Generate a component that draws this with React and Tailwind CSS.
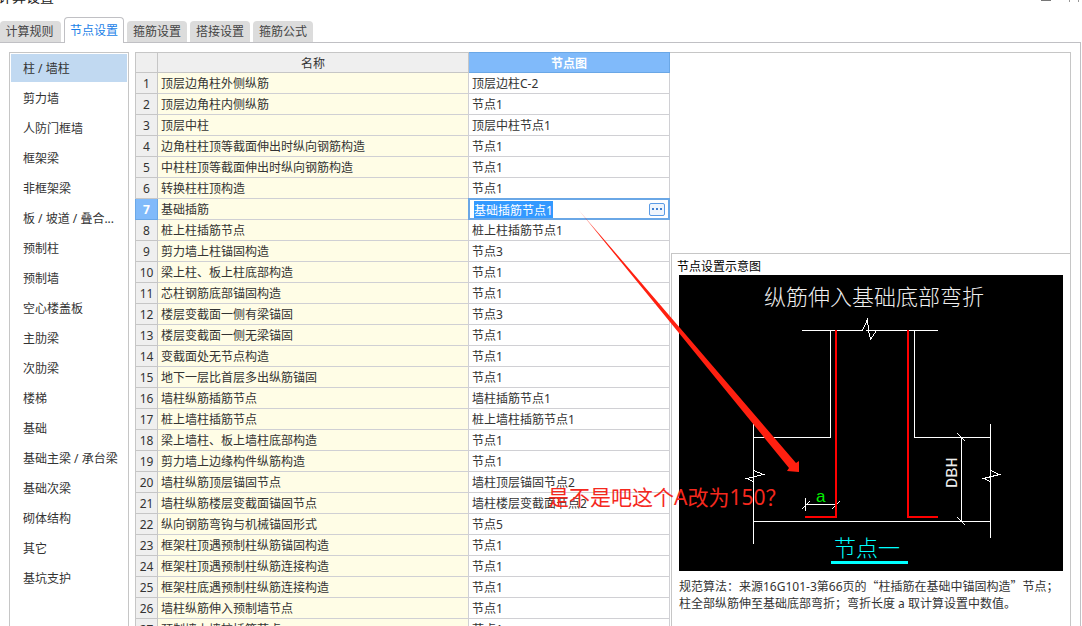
const sans = "font-['Noto_Sans','Noto_Sans_CJK_SC',sans-serif]";
const cjk = "font-['Noto_Sans_CJK_SC',sans-serif]";

const tabs = ['计算规则', '节点设置', '箍筋设置', '搭接设置', '箍筋公式'];

const categories = [
  '柱 / 墙柱', '剪力墙', '人防门框墙', '框架梁', '非框架梁', '板 / 坡道 / 叠合...', '预制柱', '预制墙',
  '空心楼盖板', '主肋梁', '次肋梁', '楼梯', '基础', '基础主梁 / 承台梁', '基础次梁', '砌体结构', '其它', '基坑支护',
];

const rows = [
  ['顶层边角柱外侧纵筋', '顶层边柱C-2'],
  ['顶层边角柱内侧纵筋', '节点1'],
  ['顶层中柱', '顶层中柱节点1'],
  ['边角柱柱顶等截面伸出时纵向钢筋构造', '节点1'],
  ['中柱柱顶等截面伸出时纵向钢筋构造', '节点1'],
  ['转换柱柱顶构造', '节点1'],
  ['基础插筋', '基础插筋节点1'],
  ['桩上柱插筋节点', '桩上柱插筋节点1'],
  ['剪力墙上柱锚固构造', '节点3'],
  ['梁上柱、板上柱底部构造', '节点1'],
  ['芯柱钢筋底部锚固构造', '节点1'],
  ['楼层变截面一侧有梁锚固', '节点3'],
  ['楼层变截面一侧无梁锚固', '节点1'],
  ['变截面处无节点构造', '节点1'],
  ['地下一层比首层多出纵筋锚固', '节点1'],
  ['墙柱纵筋插筋节点', '墙柱插筋节点1'],
  ['桩上墙柱插筋节点', '桩上墙柱插筋节点1'],
  ['梁上墙柱、板上墙柱底部构造', '节点1'],
  ['剪力墙上边缘构件纵筋构造', '节点1'],
  ['墙柱纵筋顶层锚固节点', '墙柱顶层锚固节点2'],
  ['墙柱纵筋楼层变截面锚固节点', '墙柱楼层变截面节点2'],
  ['纵向钢筋弯钩与机械锚固形式', '节点5'],
  ['框架柱顶遇预制柱纵筋锚固构造', '节点1'],
  ['框架柱顶遇预制柱纵筋连接构造', '节点1'],
  ['框架柱底遇预制柱纵筋连接构造', '节点1'],
  ['墙柱纵筋伸入预制墙节点', '节点1'],
  ['预制墙上墙柱插筋节点', '节点1'],
];

function TitleBar() {
  return (
    <header className="flex h-[9px] shrink-0 items-end justify-between overflow-hidden">
      <h1 className="-ml-0.5 pb-0.5 text-sm leading-5 text-[#222]">计算设置</h1>
      <div className="flex h-full gap-[18px] pr-[3px]">
        <button aria-label="最小化" className="h-px w-[10px] bg-[#777]" />
        <button aria-label="最大化" className="h-0.5 w-[10px] border-x border-[#999]" />
      </div>
    </header>
  );
}

function Tabs() {
  return (
    <nav role="tablist" className="flex h-[34px] shrink-0 items-end gap-[3px]">
      {tabs.map((label, i) =>
        i === 1 ? (
          <button key={label} role="tab" aria-selected="true" className="relative z-10 h-[26px] w-[60px] rounded-t border border-b-0 border-[#c0c0c4] bg-white text-xs text-[#1b7fe8]">
            {label}
          </button>
        ) : (
          <button key={label} role="tab" aria-selected="false" className={`mb-px h-[21px] rounded-t bg-[#dcdcdc] text-xs text-[#444] ${i === 0 ? 'w-[61px] pr-0.5' : 'w-[60px]'}`}>
            {label}
          </button>
        ),
      )}
    </nav>
  );
}

function Categories() {
  return (
    <ul className="w-[120px] shrink-0 border border-b-0 border-[#c6c6c6] p-px">
      {categories.map((label, i) => (
        <li key={label}>
          <button className={`block w-full truncate pl-3 text-left text-xs ${i === 0 ? 'mb-0.5 h-[28px] bg-[#c1d9f1] pt-px' : 'h-[30px]'}`}>
            {label}
          </button>
        </li>
      ))}
    </ul>
  );
}

function NodeCell({ value }) {
  return (
    <div className="flex h-5 items-center justify-between pl-[5px] pr-1 outline-2 -outline-offset-1 outline-[#6aa7e6]">
      <input
        aria-label="节点图"
        defaultValue={value}
        className="h-[17px] w-[79px] bg-[#3399ff] pt-px text-xs text-white outline-none"
      />
      <button aria-label="更多" className="flex h-[13px] w-4 items-center justify-center gap-0.5 rounded-xs border border-[#5a9be6] bg-[#eef5fd]">
        <span className="size-0.5 bg-[#3f7fd0]" />
        <span className="size-0.5 bg-[#3f7fd0]" />
        <span className="size-0.5 bg-[#3f7fd0]" />
      </button>
    </div>
  );
}

function NodeTable() {
  return (
    <table className="w-[535px] shrink-0 table-fixed border-collapse self-start text-xs leading-4">
      <colgroup>
        <col className="w-[22px]" />
        <col />
        <col className="w-[201px]" />
      </colgroup>
      <thead>
        <tr className="h-5">
          <th aria-label="序号" className="border border-[#c6c6c6] bg-[#efefef] p-0" />
          <th className="border border-[#c6c6c6] bg-[#efefef] p-0 pt-0.5 font-normal">名称</th>
          <th className="border border-[#6aa7e6] bg-[#80bafa] p-0 pt-0.5 font-bold text-white">节点图</th>
        </tr>
      </thead>
      <tbody>
        {rows.map(([name, node], i) => {
          const active = i === 6;
          return (
            <tr key={name} className="h-[21px]">
              <th className={`border p-0 pt-0.5 text-center ${active ? 'border-[#6aa7e6] bg-[#80bafa] font-bold text-white' : 'border-[#c6c6c6] bg-[#efefef] font-normal'}`}>
                {i + 1}
              </th>
              <td className="border border-[#d0d0d4] bg-[#fffde6] p-0 pl-[3px] pt-0.5">{name}</td>
              <td className={`border border-[#d0d0d4] p-0 ${active ? '' : 'pl-[3px] pt-0.5'}`}>
                {active ? <NodeCell value={node} /> : node}
              </td>
            </tr>
          );
        })}
      </tbody>
    </table>
  );
}

function Diagram() {
  return (
    <svg viewBox="0 0 384 296" className="block h-[296px] w-[384px] bg-black" shapeRendering="crispEdges" role="img" aria-label="节点设置示意图">
      <text x="195" y="30" textAnchor="middle" fill="#eee" className="font-['Noto_Sans_CJK_SC',sans-serif] text-[22px] font-light">纵筋伸入基础底部弯折</text>
      <g fill="none" stroke="#fff" strokeWidth="1">
        <path d="M123 55.5H183.5L188.5 44.5L189.5 55.5L191.5 64.5L197.5 55.5H259" />
        <path d="M187 55.5H199" />
        <path d="M151.5 55V162.5H74.5M235.5 55V162.5H311.5" />
        <path d="M74.5 149V195.5L84.5 199.5L67.5 203.5L74.5 206.5V269" />
        <path d="M74.5 195V206M311.5 195V206" />
        <path d="M311.5 149V195.5L320.5 199.5L304.5 203.5L311.5 206.5V263" />
        <path d="M74.5 246.5H311.5M282.5 162V246M278.5 158.5L286.5 166.5M278.5 242.5L286.5 250.5" />
        <path d="M126.5 223V236M126 229.5H158M122.5 234.5L130.5 226.5M152.5 234.5L160.5 226.5" />
      </g>
      <path d="M157 55V242H126M229 55V242H259" fill="none" stroke="#f00" strokeWidth="2" />
      <text x="137" y="227" fill="#0e0" className="font-['Liberation_Sans',sans-serif] text-[17px]">a</text>
      <text transform="translate(278 213) rotate(-90)" fill="#eee" className="font-['Liberation_Mono',monospace] text-[17px]">DBH</text>
      <text x="155" y="281" fill="#0ff" className="font-['Noto_Sans_CJK_SC',sans-serif] text-[22px] font-light">节点一</text>
      <path d="M152 287.5H229" stroke="#0ff" strokeWidth="3" />
    </svg>
  );
}

function Preview() {
  return (
    <section className="flex min-w-0 flex-1 flex-col border-r border-t border-[#c6c6c6]">
      <div className="h-[200px] shrink-0" />
      <div className="ml-px flex-1 border-l border-t border-[#c6c6c6] pl-[7px] pt-1">
        <h2 className="-ml-0.5 text-xs leading-[17px] text-black">节点设置示意图</h2>
        <Diagram />
        <p className="pt-1.5 text-xs leading-[17px]">
          规范算法：来源16G101-3第66页的<span className={cjk}>“柱插筋在基础中锚固构造”</span>节点；
          <br />
          柱全部纵筋伸至基础底部弯折；弯折长度 a 取计算设置中数值。
        </p>
      </div>
    </section>
  );
}

export default function App() {
  return (
    <div lang="zh-CN" className={`relative flex h-screen flex-col overflow-hidden bg-white text-[#333] ${sans}`}>
      <TitleBar />
      <Tabs />
      <main className="-mt-px mr-px flex min-h-0 flex-1 gap-1.5 border-r border-t border-[#c0c0c4] pl-[9px] pr-[9px] pt-[9px]">
        <Categories />
        <div className="flex min-w-0 flex-1">
          <NodeTable />
          <Preview />
        </div>
      </main>
      <svg className="pointer-events-none absolute left-[570px] top-[200px]" width="240" height="280" viewBox="0 0 240 280" aria-hidden="true">
        <defs>
          <linearGradient id="fade" gradientUnits="userSpaceOnUse" x1="7" y1="8" x2="30" y2="36">
            <stop offset="0" stopColor="#ff2010" stopOpacity="0.2" />
            <stop offset="1" stopColor="#ff2010" />
          </linearGradient>
        </defs>
        <path d="M7 8L226 263L229 261L229 272L217 271L219 268Z" fill="url(#fade)" />
      </svg>
      <p className="pointer-events-none absolute left-[548px] top-[483px] whitespace-nowrap text-[21px] leading-7 text-[#f5281e]">是不是吧这个A改为150？</p>
    </div>
  );
}
